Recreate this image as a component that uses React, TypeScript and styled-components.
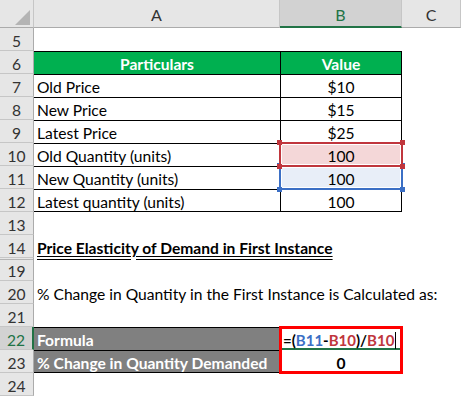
import type { ReactNode } from 'react';
import styled, { createGlobalStyle } from 'styled-components';

const GREEN = '#217346';

const GlobalStyle = createGlobalStyle`
  html, body { margin: 0; padding: 0; background: #fff; }
  body { font-family: Lato, "Liberation Sans", sans-serif; }
`;

const lineShadows = (lines = '') => {
    const parts: string[] = [];
    if (lines.includes('t')) parts.push('inset 0 1px 0 #000');
    if (lines.includes('b')) parts.push('inset 0 -1px 0 #000');
    if (lines.includes('l')) parts.push('inset 1px 0 0 #000');
    if (lines.includes('r')) parts.push('inset -1px 0 0 #000');
    return parts.length ? parts.join(', ') : 'none';
};

type TableRow = { n: number; label: string; value: string; ref?: 'red' | 'blue' };

const tableRows: TableRow[] = [
    { n: 7, label: 'Old Price', value: '$10' },
    { n: 8, label: 'New Price', value: '$15' },
    { n: 9, label: 'Latest Price', value: '$25' },
    { n: 10, label: 'Old Quantity (units)', value: '100', ref: 'red' },
    { n: 11, label: 'New Quantity (units)', value: '100', ref: 'blue' },
    { n: 12, label: 'Latest quantity (units)', value: '100' },
];

const refColors = {
    red: { line: '#c0363d', fill: '#f4d7d8' },
    blue: { line: '#3b6fc5', fill: '#e8eef8' },
};

const RefBox = ({ tone, children }: { tone: 'red' | 'blue'; children: ReactNode }) => (
    <RefFrame $line={refColors[tone].line} $fill={refColors[tone].fill} $top={tone === 'red'}>
        <Handle $color={refColors[tone].line} $x="left" $y="top" />
        <Handle $color={refColors[tone].line} $x="right" $y="top" />
        <Handle $color={refColors[tone].line} $x="left" $y="bottom" />
        <Handle $color={refColors[tone].line} $x="right" $y="bottom" />
        {children}
    </RefFrame>
);

const App = () => {
    return (
        <>
            <GlobalStyle />
            <Sheet>
                <Corner>
                    <svg width="34" height="28" viewBox="0 0 34 28">
                        <polygon points="15,25 30,25 30,10" fill="#b4b4b4" />
                    </svg>
                </Corner>
                <ColHeader>A</ColHeader>
                <ColHeader $active>B</ColHeader>
                <ColHeader>C</ColHeader>

                <RowHeader>5</RowHeader>
                <Cell />
                <Cell />
                <Cell />

                <RowHeader>6</RowHeader>
                <Cell $align="center" $bg="#00b050" $color="#fff" $bold $lines="t">Particulars</Cell>
                <Cell $align="center" $bg="#00b050" $color="#fff" $bold $lines="tlr">Value</Cell>
                <Cell />

                {tableRows.map((row, i) => {
                    const last = i === tableRows.length - 1;
                    return [
                        <RowHeader key={`h${row.n}`}>{row.n}</RowHeader>,
                        <Cell key={`a${row.n}`} $lines={last ? 'tb' : 't'}>{row.label}</Cell>,
                        <Cell key={`b${row.n}`} $align="center" $lines={last ? 'tlrb' : 'tlr'}>
                            {row.ref ? <RefBox tone={row.ref}>{row.value}</RefBox> : row.value}
                        </Cell>,
                        <Cell key={`c${row.n}`} />,
                    ];
                })}

                <RowHeader>13</RowHeader>
                <Cell />
                <Cell />
                <Cell />

                <RowHeader>14</RowHeader>
                <Cell $bold>
                    <Heading>Price Elasticity of Demand in First Instance</Heading>
                </Cell>
                <Cell />
                <Cell />

                <RowHeader $hiddenAbove>19</RowHeader>
                <Cell />
                <Cell />
                <Cell />

                <RowHeader>20</RowHeader>
                <Cell>% Change in Quantity in the First Instance is Calculated as:</Cell>
                <Cell />
                <Cell />

                <RowHeader>21</RowHeader>
                <Cell />
                <Cell />
                <Cell />

                <RowHeader $active>22</RowHeader>
                <Cell $bg="#808080" $color="#fff" $bold $lines="t">Formula</Cell>
                <AnswerFrame>
                    <FormulaCell>
                        =(<Ref $color="#3b6fc5">B11</Ref>-<Ref $color="#c0363d">B10</Ref>)/<Ref $color="#c0363d">B10</Ref>
                        <Caret />
                    </FormulaCell>
                    <Cell $align="center" $bold>0</Cell>
                </AnswerFrame>
                <Cell />

                <RowHeader>23</RowHeader>
                <Cell $bg="#808080" $color="#fff" $bold $lines="tb">% Change in Quantity Demanded</Cell>
                <Cell />

                <RowHeader>24</RowHeader>
                <Cell />
                <Cell />
                <Cell />
            </Sheet>
        </>
    );
};

export default App;

const Sheet = styled.div`
    display: grid;
    grid-template-columns: 34px 246px 122px 59px;
    grid-template-rows: 28px;
    grid-auto-rows: 23px;
    width: 461px;
    height: 396px;
    overflow: hidden;
    background: #fff;
    color: #000;
`;

const Corner = styled.div`
    background: #e6e6e6;
    border-right: 1px solid #c6c6c6;
    border-bottom: 1px solid #ababab;
    box-sizing: border-box;
    svg { display: block; }
`;

const ColHeader = styled.div<{ $active?: boolean }>`
    display: flex;
    align-items: center;
    justify-content: center;
    box-sizing: border-box;
    background: ${p => (p.$active ? '#d2d2d2' : '#e6e6e6')};
    color: ${p => (p.$active ? GREEN : '#333')};
    border-right: 1px solid #c6c6c6;
    border-bottom: ${p => (p.$active ? `2px solid ${GREEN}` : '1px solid #ababab')};
    font-size: 16px;
    padding-top: 2px;
`;

const RowHeader = styled.div<{ $active?: boolean; $hiddenAbove?: boolean }>`
    display: flex;
    align-items: center;
    justify-content: center;
    box-sizing: border-box;
    background: ${p => (p.$active ? '#d2d2d2' : '#e6e6e6')};
    color: ${p => (p.$active ? GREEN : '#333')};
    border-bottom: 1px solid #c6c6c6;
    border-right: ${p => (p.$active ? `2px solid ${GREEN}` : '1px solid #ababab')};
    box-shadow: ${p => (p.$hiddenAbove ? 'inset 0 1px 0 #e6e6e6, inset 0 2px 0 #b4b4b4' : 'none')};
    font-size: 15.6px;
    padding-top: 3px;
`;

const Cell = styled.div<{ $align?: 'left' | 'center'; $bg?: string; $color?: string; $bold?: boolean; $lines?: string }>`
    position: relative;
    display: flex;
    align-items: center;
    justify-content: ${p => (p.$align === 'center' ? 'center' : 'flex-start')};
    box-sizing: border-box;
    height: 23px;
    padding: 3px 3px 0;
    font-size: 15.6px;
    white-space: nowrap;
    background: ${p => p.$bg ?? 'transparent'};
    color: ${p => p.$color ?? '#000'};
    font-weight: ${p => (p.$bold ? 700 : 400)};
    box-shadow: ${p => lineShadows(p.$lines)};
`;

const Heading = styled.span`
    text-decoration: underline double;
    text-underline-offset: 2px;
`;

const RefFrame = styled.div<{ $line: string; $fill: string; $top: boolean }>`
    position: absolute;
    inset: -1px;
    z-index: ${p => (p.$top ? 2 : 1)};
    display: flex;
    align-items: center;
    justify-content: center;
    padding-top: 3px;
    border: 2px solid ${p => p.$line};
    background: ${p => p.$fill};
    box-shadow: inset 0 0 0 1px #fff;
`;

const Handle = styled.span<{ $color: string; $x: 'left' | 'right'; $y: 'top' | 'bottom' }>`
    position: absolute;
    width: 5px;
    height: 5px;
    background: ${p => p.$color};
    ${p => p.$x}: -4px;
    ${p => p.$y}: -4px;
`;

const AnswerFrame = styled.div`
    grid-row: span 2;
    display: flex;
    flex-direction: column;
    outline: 3px solid #ff0000;
    outline-offset: -2px;
    position: relative;
    z-index: 3;
`;

const FormulaCell = styled.div`
    display: flex;
    align-items: center;
    box-sizing: border-box;
    height: 23px;
    padding: 3px 3px 0;
    font-size: 15px;
    font-weight: 700;
    white-space: nowrap;
    box-shadow: inset 0 -2px 0 ${GREEN};
`;

const Ref = styled.span<{ $color: string }>`
    color: ${p => p.$color};
`;

const Caret = styled.span`
    display: inline-block;
    width: 1px;
    height: 17px;
    margin-left: 1px;
    background: #000;
`;
